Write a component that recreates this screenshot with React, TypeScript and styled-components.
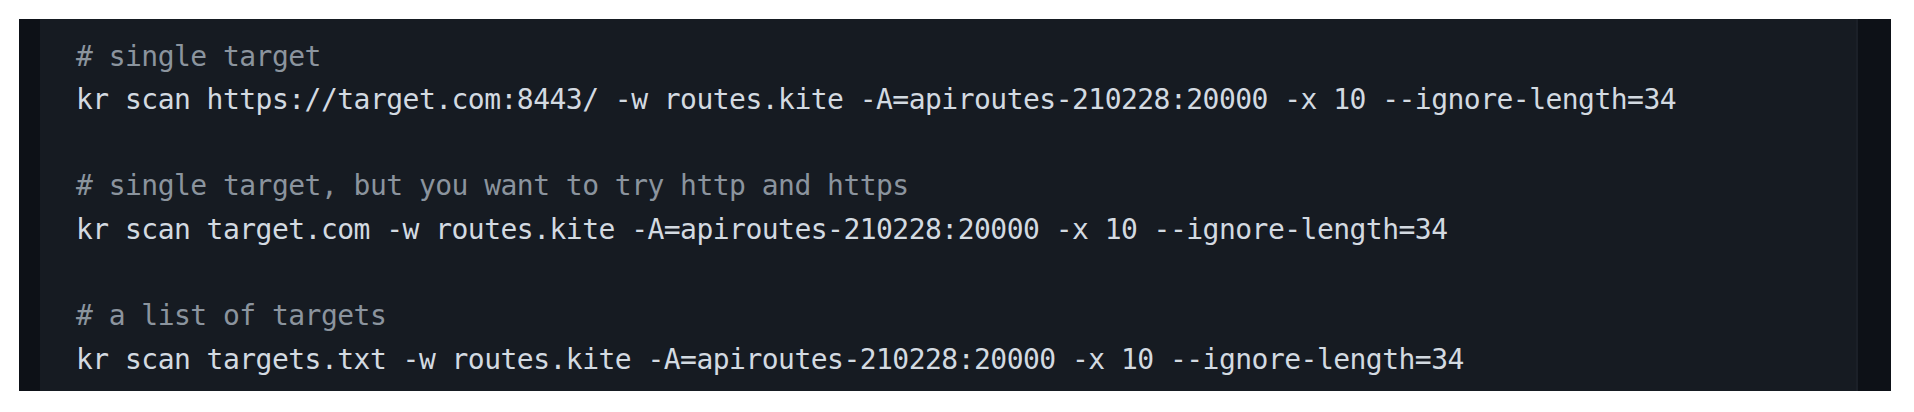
import React from "react";
import styled, { createGlobalStyle } from "styled-components";

const GlobalStyle = createGlobalStyle`
  html, body {
    margin: 0;
    padding: 0;
    background: #ffffff;
  }
  #root {
    width: 1914px;
    height: 412px;
  }
`;

const Page = styled.div`
  box-sizing: border-box;
  width: 1914px;
  height: 412px;
  padding: 19px 23px 21px 19px;
  background: #ffffff;
`;

const Frame = styled.div`
  display: flex;
  height: 100%;
  background: #0d1117;
`;

const Gutter = styled.div<{ $w: number }>`
  flex: 0 0 ${(p) => p.$w}px;
  background: #0d1117;
`;

const CodeArea = styled.pre`
  flex: 1;
  margin: 0;
  box-sizing: border-box;
  padding: 15.5px 0 0 36px;
  background: #161b22;
  border-right: 2px solid #1b2028;
  font-family: "DejaVu Sans Mono", "Liberation Mono", monospace;
  font-size: 28px;
  letter-spacing: -0.53px;
  line-height: 43.3px;
  color: #c9d1d9;
  overflow: hidden;
  white-space: pre;
`;

const Line = styled.div<{ $comment?: boolean }>`
  height: 43.3px;
  color: ${(p) => (p.$comment ? "#8b949e" : "#d3dae1")};
`;

const lines: { text: string; comment?: boolean }[] = [
  { text: "# single target", comment: true },
  { text: "kr scan https://target.com:8443/ -w routes.kite -A=apiroutes-210228:20000 -x 10 --ignore-length=34" },
  { text: "" },
  { text: "# single target, but you want to try http and https", comment: true },
  { text: "kr scan target.com -w routes.kite -A=apiroutes-210228:20000 -x 10 --ignore-length=34" },
  { text: "" },
  { text: "# a list of targets", comment: true },
  { text: "kr scan targets.txt -w routes.kite -A=apiroutes-210228:20000 -x 10 --ignore-length=34" },
];

export default function App() {
  return (
    <>
      <GlobalStyle />
      <Page>
        <Frame>
          <Gutter $w={21} />
          <CodeArea>
            {lines.map((l, i) => (
              <Line key={i} $comment={l.comment}>
                {l.text}
              </Line>
            ))}
          </CodeArea>
          <Gutter $w={33} />
        </Frame>
      </Page>
    </>
  );
}
